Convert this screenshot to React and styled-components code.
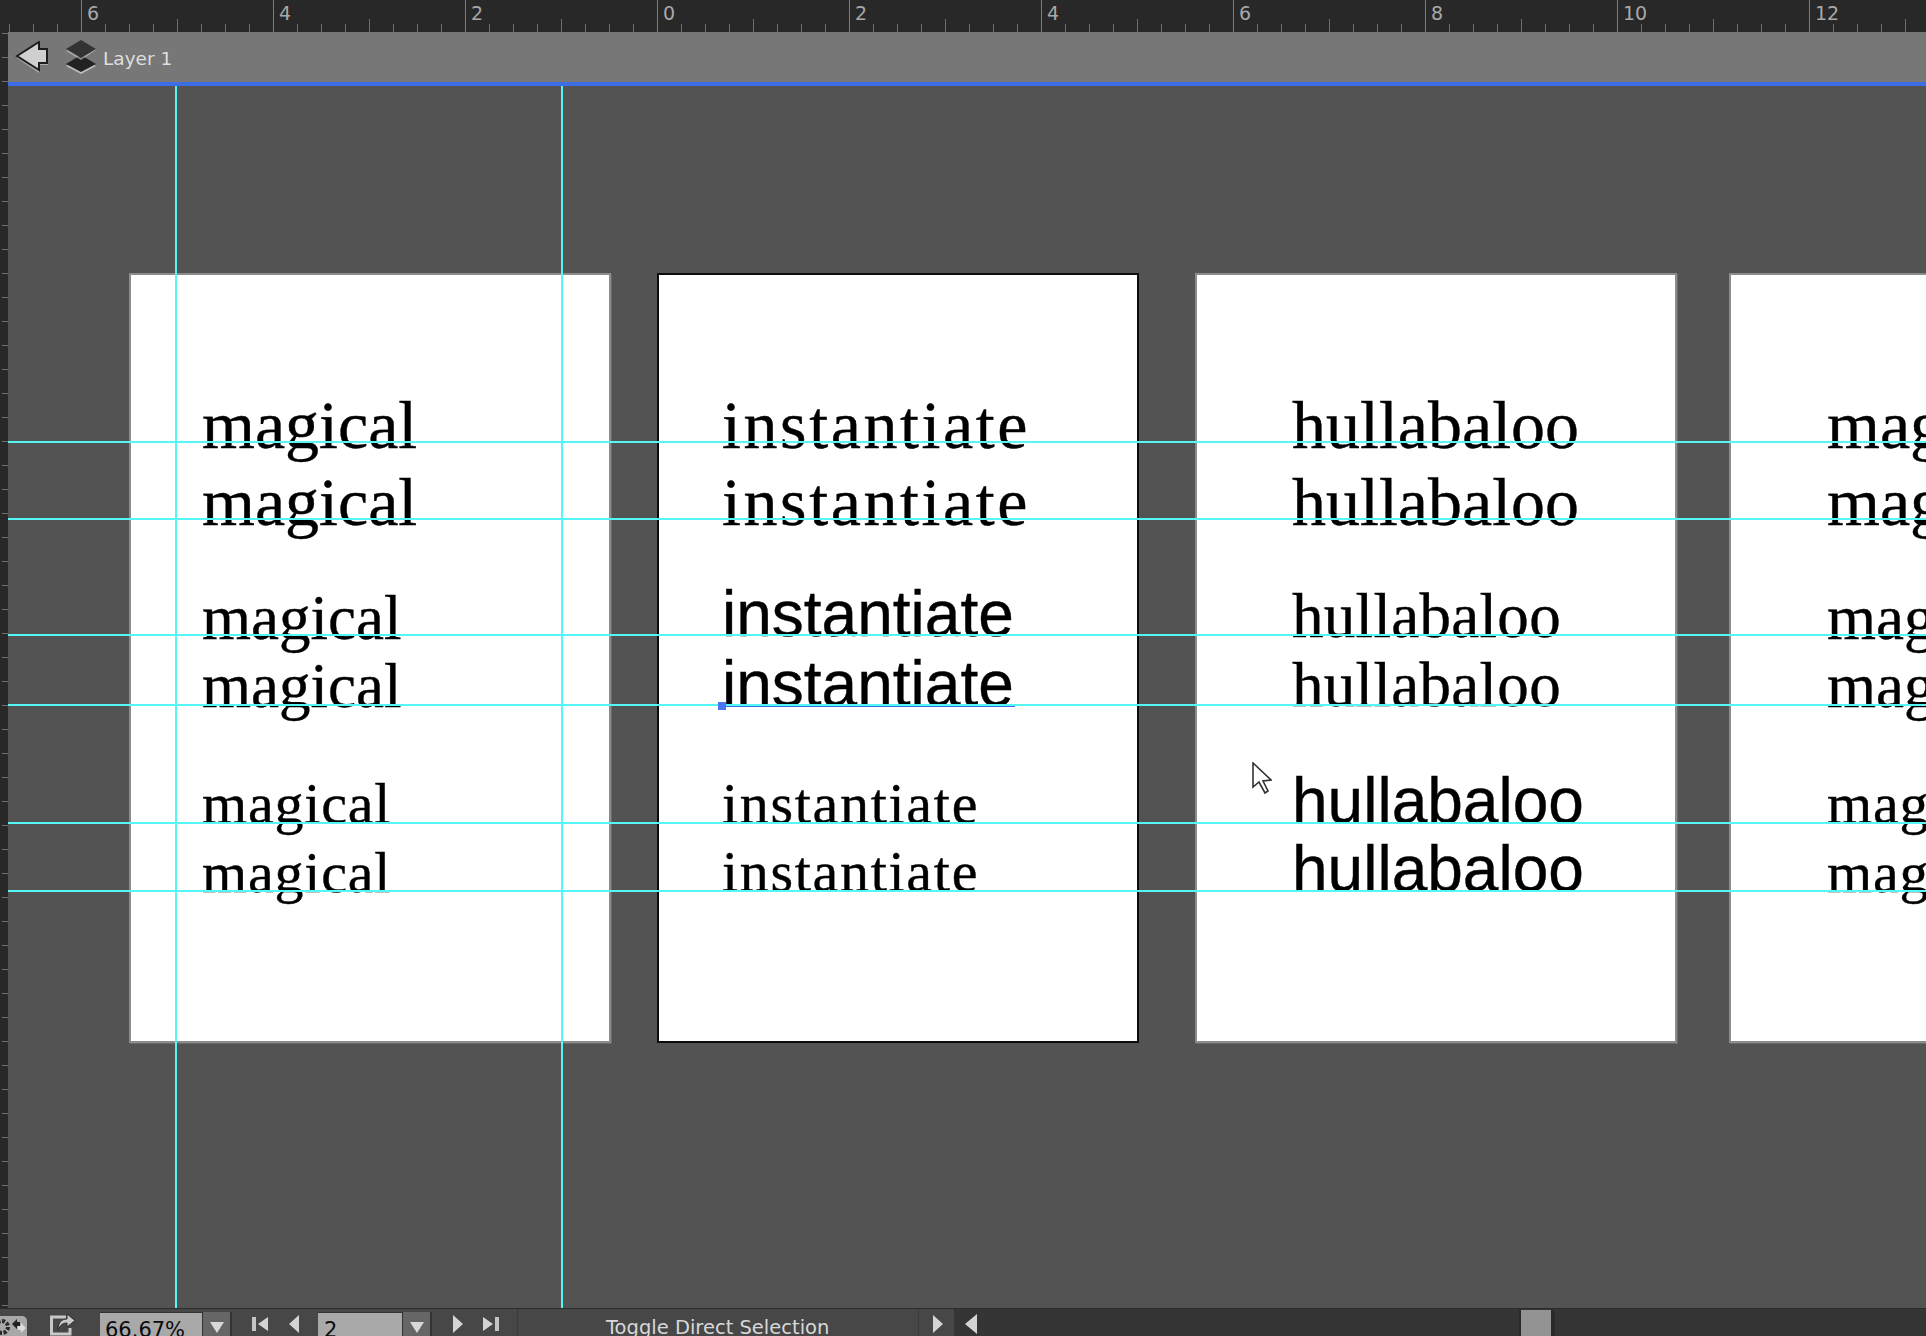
import React from 'react';
import styled, { createGlobalStyle } from 'styled-components';

const GlobalStyle = createGlobalStyle`
  html, body {
    margin: 0;
    padding: 0;
    background: #535353;
  }
`;

const RULER_LABELS = ['6', '4', '2', '0', '2', '4', '6', '8', '10', '12'];
const H_GUIDES = [356, 433, 549, 619, 737, 805];
const V_GUIDES = [168, 554];

const SERIF = '"Liberation Serif", serif';
const SANS = '"Liberation Sans", sans-serif';

const PAGES = [
  {
    word: 'magical',
    offset: 0,
    inset: 73,
    groups: [
      { gap: 112, lh: 77, size: 68, track: 0 },
      { gap: 43, lh: 68, size: 63, track: 0 },
      { gap: 49, lh: 69, size: 58, track: 0.8 },
    ],
  },
  {
    word: 'instantiate',
    offset: 46,
    inset: 65,
    active: true,
    groups: [
      { gap: 112, lh: 77, size: 68, track: 2.6 },
      { gap: 38, lh: 70, size: 64, track: 0, sans: true },
      { gap: 51, lh: 68, size: 58, track: 1.7 },
    ],
  },
  {
    word: 'hullabaloo',
    offset: 56,
    inset: 97,
    groups: [
      { gap: 112, lh: 77, size: 68, track: 0 },
      { gap: 41, lh: 69, size: 63, track: 0.3 },
      { gap: 47, lh: 68, size: 64, track: 0, sans: true },
    ],
  },
  {
    word: 'magical',
    offset: 52,
    inset: 98,
    groups: [
      { gap: 112, lh: 77, size: 68, track: 0 },
      { gap: 43, lh: 68, size: 63, track: 0 },
      { gap: 49, lh: 69, size: 58, track: 0.8 },
    ],
  },
];

function Triangle({ dir, w = 10, h = 18 }) {
  const points = dir === 'left' ? `${w},0 ${w},${h} 0,${h / 2}` : `0,0 0,${h} ${w},${h / 2}`;
  return (
    <svg width={w} height={h} viewBox={`0 0 ${w} ${h}`}>
      <polygon points={points} fill="#d4d4d4" />
    </svg>
  );
}

function FirstPageIcon() {
  return (
    <svg width="16" height="16" viewBox="0 0 16 16">
      <rect x="0" y="1" width="4" height="14" fill="#c4c4c4" />
      <polygon points="16,1 16,15 6,8" fill="#d4d4d4" />
    </svg>
  );
}

function LastPageIcon() {
  return (
    <svg width="16" height="16" viewBox="0 0 16 16">
      <polygon points="0,1 0,15 10,8" fill="#d4d4d4" />
      <rect x="12" y="1" width="4" height="14" fill="#c4c4c4" />
    </svg>
  );
}

function BackIcon() {
  return (
    <svg width="34" height="32" viewBox="0 0 34 32">
      <polygon points="2,17 24,2 24,10 33,10 33,24 24,24 24,32" fill="#c4c4c4" opacity="0.7" />
      <polygon points="2,15 24,1 24,8 32,8 32,22 24,22 24,29" fill="#d0d0d0" stroke="#1d1d1d" strokeWidth="2" />
    </svg>
  );
}

function LayersIcon() {
  return (
    <svg width="30" height="34" viewBox="0 0 30 34">
      <polygon points="15,17 30,26 15,34 0,26" fill="#bdbdbd" />
      <polygon points="15,15 30,24 15,32 0,24" fill="#222" />
      <polygon points="15,2 30,10 15,20 0,11" fill="#c9c9c9" opacity="0.6" />
      <polygon points="15,0 30,9 15,18 0,9" fill="#333" />
    </svg>
  );
}

function GearIcon() {
  return (
    <svg width="28" height="28" viewBox="0 0 28 28">
      <rect x="-6" y="0" width="33" height="30" rx="5" fill="#a8a8a8" />
      <circle cx="2" cy="11" r="6" fill="none" stroke="#2a2a2a" strokeWidth="4" strokeDasharray="3 1.6" />
      <polygon points="12,8 17,3 17,6 20,6 20,10 17,10 17,13" fill="#222" />
      <polygon points="26,12 21,7 21,10 18,10 18,14 21,14 21,17" fill="#ddd" />
    </svg>
  );
}

function ShareIcon() {
  return (
    <svg width="26" height="26" viewBox="0 0 26 26">
      <path d="M16 6 H1.5 V23 H20 V17" fill="none" stroke="#c8c8c8" strokeWidth="3" />
      <path d="M8 19 C8 11 12 8 17 8 V3 L25 9.5 L17 16 V12 C13 12 10 14 8 19 Z" fill="#c8c8c8" stroke="#2d2d2d" strokeWidth="1" />
    </svg>
  );
}

function CursorIcon() {
  return (
    <svg width="20" height="33" viewBox="0 0 20 33">
      <path d="M1 1 V25 L7 20 L13 31 L16 29 L11 19 L19 18 Z" fill="#fff" stroke="#333" strokeWidth="1.6" />
    </svg>
  );
}

export default function App() {
  return (
    <Screen>
      <GlobalStyle />
      <TopRuler>
        <RulerLead />
        {RULER_LABELS.map((label, i) => (
          <RulerCell key={i}>{label}</RulerCell>
        ))}
      </TopRuler>
      <Body>
        <SideRuler />
        <Main>
          <LayerBar>
            <BackSlot><BackIcon /></BackSlot>
            <LayersSlot><LayersIcon /></LayersSlot>
            <LayerName>Layer 1</LayerName>
          </LayerBar>
          <Canvas>
            {PAGES.map((page, i) => (
              <Page key={i} $offset={page.offset} $inset={page.inset} $active={page.active}>
                {page.groups.map((group, j) => (
                  <WordGroup key={j} $gap={group.gap}>
                    <Word $lh={group.lh} $size={group.size} $track={group.track} $sans={group.sans}>{page.word}</Word>
                    <Word $lh={group.lh} $size={group.size} $track={group.track} $sans={group.sans}>{page.word}</Word>
                  </WordGroup>
                ))}
              </Page>
            ))}
            {H_GUIDES.map(y => <HGuide key={y} $y={y} />)}
            {V_GUIDES.map(x => <VGuide key={x} $x={x} />)}
            <TextPathLine />
            <TextPathHandle />
            <Cursor><CursorIcon /></Cursor>
          </Canvas>
        </Main>
      </Body>
      <StatusBar>
        <GearSlot><GearIcon /></GearSlot>
        <ShareSlot><ShareIcon /></ShareSlot>
        <Field $width={102}>66.67%</Field>
        <DropButton><DropArrow /></DropButton>
        <NavGroup $width={86} $pad={20}>
          <FirstPageIcon />
          <NavArrow><Triangle dir="left" /></NavArrow>
        </NavGroup>
        <Field $width={84} $page>2</Field>
        <DropButton><DropArrow /></DropButton>
        <NavGroup $width={85} $pad={21}>
          <Triangle dir="right" />
          <NavArrow $wide><LastPageIcon /></NavArrow>
        </NavGroup>
        <StatusText>Toggle Direct Selection</StatusText>
        <StatusNext><Triangle dir="right" /></StatusNext>
        <ScrollTrack>
          <ScrollBack><Triangle dir="left" w={12} h={20} /></ScrollBack>
          <ScrollThumb />
        </ScrollTrack>
      </StatusBar>
    </Screen>
  );
}

const Screen = styled.div`
  width: 1926px;
  height: 1336px;
  display: flex;
  flex-direction: column;
  overflow: hidden;
  background: #535353;
  font-family: "DejaVu Sans", sans-serif;
`;

const TopRuler = styled.div`
  height: 32px;
  flex-shrink: 0;
  display: flex;
  background-color: #282828;
  background-image:
    linear-gradient(to right, #6f6f6f 1px, transparent 1px),
    linear-gradient(to right, #6f6f6f 1px, transparent 1px);
  background-size: 24px 8px, 96px 13px;
  background-position: 9px bottom, 81px bottom;
  background-repeat: repeat-x;
`;

const RulerLead = styled.div`
  width: 81px;
  flex-shrink: 0;
`;

const RulerCell = styled.div`
  width: 192px;
  flex-shrink: 0;
  box-sizing: border-box;
  border-left: 1px solid #7c7c7c;
  padding: 2px 0 0 5px;
  font-size: 19px;
  line-height: 22px;
  color: #a8a8a8;
`;

const Body = styled.div`
  flex: 1;
  display: flex;
  min-height: 0;
`;

const SideRuler = styled.div`
  width: 8px;
  flex-shrink: 0;
  background-color: #282828;
  background-image: linear-gradient(#6f6f6f 1px, transparent 1px);
  background-size: 6px 24px;
  background-position: 2px 1px;
  background-repeat: repeat-y;
`;

const Main = styled.div`
  flex: 1;
  display: flex;
  flex-direction: column;
  min-width: 0;
`;

const LayerBar = styled.div`
  height: 50px;
  flex-shrink: 0;
  box-sizing: content-box;
  display: flex;
  align-items: center;
  background: #777777;
  border-bottom: 4px solid #3d6ee6;
`;

const BackSlot = styled.div`
  width: 34px;
  margin-left: 7px;
  display: flex;
`;

const LayersSlot = styled.div`
  width: 30px;
  margin-left: 17px;
  display: flex;
`;

const LayerName = styled.div`
  margin: 2px 0 0 7px;
  font-size: 18.5px;
  color: #dedede;
`;

const Canvas = styled.div`
  flex: 1;
  position: relative;
  display: flex;
  align-items: flex-start;
  overflow: hidden;
  padding: 187px 0 0 121px;
  background: #535353;
`;

const Page = styled.div`
  width: 482px;
  height: 770px;
  flex-shrink: 0;
  box-sizing: border-box;
  margin-left: ${p => p.$offset}px;
  padding-left: ${p => p.$inset - 2}px;
  background: #fff;
  border: 2px solid ${p => (p.$active ? '#0c0c0c' : '#8c8c8c')};
  box-shadow: ${p => (p.$active ? 'none' : '1px 1px 0 #6a6a6a')};
`;

const WordGroup = styled.div`
  margin-top: ${p => p.$gap}px;
`;

const Word = styled.div`
  height: ${p => p.$lh}px;
  line-height: ${p => p.$lh}px;
  font-family: ${p => (p.$sans ? SANS : SERIF)};
  font-size: ${p => p.$size}px;
  letter-spacing: ${p => p.$track}px;
  -webkit-text-stroke: 0.4px #000;
  color: #000;
  white-space: nowrap;
`;

const HGuide = styled.div`
  position: absolute;
  left: 0;
  right: 0;
  top: ${p => p.$y - 1}px;
  height: 2px;
  background: #55f6f6;
`;

const VGuide = styled.div`
  position: absolute;
  top: 0;
  bottom: 0;
  left: ${p => p.$x - 1}px;
  width: 2px;
  background: #55f6f6;
`;

const TextPathLine = styled.div`
  position: absolute;
  left: 718px;
  top: 620px;
  width: 289px;
  height: 1px;
  background: #3d6ee6;
`;

const TextPathHandle = styled.div`
  position: absolute;
  left: 710px;
  top: 616px;
  width: 8px;
  height: 8px;
  background: #4a76f0;
`;

const Cursor = styled.div`
  position: absolute;
  left: 1244px;
  top: 676px;
  display: flex;
`;

const StatusBar = styled.div`
  height: 28px;
  flex-shrink: 0;
  box-sizing: border-box;
  display: flex;
  align-items: flex-start;
  overflow: hidden;
  background: #474747;
  border-top: 1px solid #2b2b2b;
`;

const GearSlot = styled.div`
  width: 50px;
  padding-top: 7px;
  display: flex;
`;

const ShareSlot = styled.div`
  width: 50px;
  padding-top: 2px;
  display: flex;
`;

const Field = styled.div`
  width: ${p => p.$width}px;
  height: 40px;
  flex-shrink: 0;
  box-sizing: border-box;
  margin-top: 3px;
  padding: 4px 0 0 ${p => (p.$page ? 6 : 5)}px;
  background: #a9a9a9;
  border-top: 1px solid #333;
  font-size: 21px;
  line-height: 26px;
  color: #0c0c0c;
`;

const DropButton = styled.div`
  width: 30px;
  height: 40px;
  flex-shrink: 0;
  box-sizing: border-box;
  margin-top: 3px;
  padding: 10px 0 0 7px;
  background: #666;
  border-left: 1px solid #333;
  border-right: 2px solid #333;
`;

const DropArrow = styled.div`
  width: 0;
  height: 0;
  border-left: 7px solid transparent;
  border-right: 7px solid transparent;
  border-top: 11px solid #d8d8d8;
`;

const NavGroup = styled.div`
  width: ${p => p.$width}px;
  flex-shrink: 0;
  box-sizing: border-box;
  display: flex;
  align-items: center;
  padding: 6px 0 0 ${p => p.$pad}px;
`;

const NavArrow = styled.div`
  display: flex;
  margin-left: ${p => (p.$wide ? 20 : 21)}px;
`;

const StatusText = styled.div`
  width: 402px;
  flex-shrink: 0;
  box-sizing: border-box;
  height: 40px;
  padding: 6px 0 0 88px;
  border-left: 1px solid #3a3a3a;
  border-right: 1px solid #3a3a3a;
  font-size: 19.5px;
  line-height: 26px;
  color: #d8d8d8;
  white-space: nowrap;
  overflow: hidden;
`;

const StatusNext = styled.div`
  width: 35px;
  flex-shrink: 0;
  box-sizing: border-box;
  padding: 6px 0 0 14px;
  display: flex;
`;

const ScrollTrack = styled.div`
  flex: 1;
  height: 28px;
  display: flex;
  align-items: flex-start;
  background: #353535;
`;

const ScrollBack = styled.div`
  width: 567px;
  flex-shrink: 0;
  box-sizing: border-box;
  padding: 5px 0 0 11px;
  display: flex;
`;

const ScrollThumb = styled.div`
  width: 30px;
  height: 28px;
  margin-top: 1px;
  background: #939393;
  box-shadow: -2px 0 0 #2a2a2a, 4px 0 0 #2a2a2a;
`;
